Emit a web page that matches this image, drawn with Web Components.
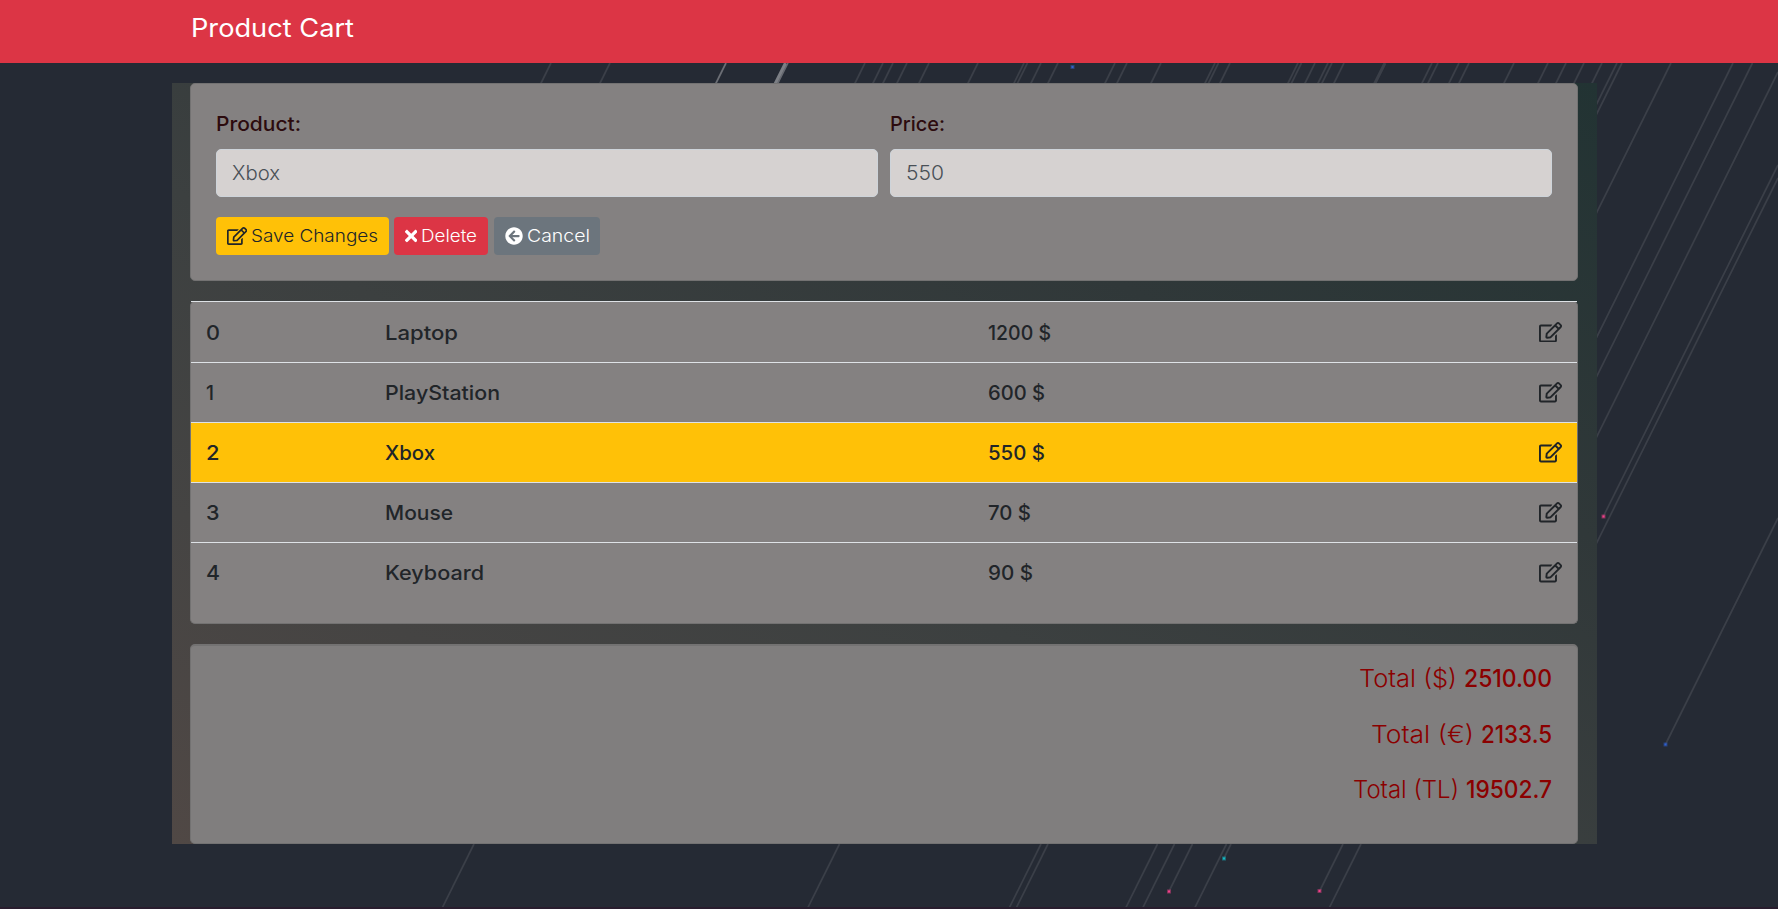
<!DOCTYPE html>
<html lang="en"><head><meta charset="utf-8"><title>Product Cart</title>
<style>
html,body{margin:0;height:100%;overflow:hidden}
body{background:#252a34;font-family:Inter,"Open Sans",sans-serif;font-weight:300;font-size:20px;line-height:30px;color:#212529;position:relative}
</style></head><body>
<falling-lines></falling-lines>
<app-navbar><fit-text w="163">Product Cart</fit-text></app-navbar>
<cart-container>
  <product-form></product-form>
  <product-table></product-table>
  <cart-totals></cart-totals>
</cart-container>
<script>
const def=(name,html,setup)=>customElements.define(name,class extends HTMLElement{
  connectedCallback(){
    if(this.shadowRoot)return;
    const t=document.createElement('template');
    t.innerHTML=typeof html==='function'?html(this):html;
    this.attachShadow({mode:'open'}).appendChild(t.content.cloneNode(true));
    if(setup)setup(this);
  }
});

const icons={
  edit:['0 0 576 512','M402.3 344.9l32-32c5-5 13.7-1.5 13.7 5.7V464c0 26.500-21.500 48-48 48H48c-26.500 0-48-21.500-48-48V112c0-26.500 21.500-48 48-48h273.500c7.100 0 10.700 8.600 5.700 13.700l-32 32c-1.500 1.500-3.500 2.300-5.700 2.300H48v352h352V350.500c0-2.100.8-4.100 2.300-5.600zm156.600-201.800L296.300 405.700l-90.400 10c-26.200 2.900-48.500-19.200-45.600-45.600l10-90.400L432.900 17.100c22.900-22.900 59.900-22.900 82.700 0l43.200 43.200c22.900 22.900 22.900 60 .1 82.800zM460.100 174L402 115.900 216.200 301.800l-7.300 65.300 65.300-7.300L460.100 174zm64.800-79.700l-43.200-43.200c-4.100-4.100-10.800-4.100-14.800 0L436 82l58.100 58.100 30.900-30.900c4-4.200 4-10.800-.1-14.900z'],
  times:['0 0 352 512','M242.720 256l100.070-100.070c12.280-12.280 12.280-32.190 0-44.480l-22.240-22.240c-12.280-12.280-32.190-12.280-44.480 0L176 189.280 75.930 89.210c-12.280-12.280-32.190-12.280-44.480 0L9.210 111.450c-12.280 12.280-12.280 32.190 0 44.480L109.280 256 9.210 356.070c-12.280 12.280-12.280 32.190 0 44.480l22.240 22.240c12.280 12.280 32.200 12.280 44.480 0L176 322.720l100.070 100.070c12.280 12.280 32.200 12.280 44.480 0l22.240-22.240c12.280-12.280 12.280-32.190 0-44.480L242.720 256z'],
  back:['0 0 512 512','M256 504C119 504 8 393 8 256S119 8 256 8s248 111 248 248-111 248-248 248zm28.900-143.600L209.400 288H392c13.300 0 24-10.700 24-24v-16c0-13.300-10.700-24-24-24H209.400l75.500-72.400c9.700-9.300 9.900-24.800.4-34.300l-11-10.900c-9.400-9.400-24.600-9.400-33.900 0L107.700 239c-9.400 9.400-9.400 24.600 0 33.900l132.700 132.700c9.400 9.400 24.600 9.400 33.900 0l11-10.900c9.500-9.500 9.300-25-.4-34.300z']
};
def('app-icon',el=>{
  const[v,d]=icons[el.getAttribute('name')];const[,,w,h]=v.split(' ');
  return `<style>:host{display:inline-block;font-size:18px;flex:none}svg{display:block;height:1em;width:${w/h}em;fill:currentColor}</style><svg viewBox="${v}"><path d="${d}"/></svg>`;
});

def('falling-lines',()=>{
  // Horizontal shift for each pixel of descent.
  const k=-.497,out=[];
  const line=(x,y,y2,o=.1,w=1.7)=>out.push(`<line x1="${x}" y1="${y}" x2="${x+k*(y2-y)}" y2="${y2}" stroke="#fff" stroke-opacity="${o}" stroke-width="${w}"/>`);
  [551,610,865,883,893,907,929,978,1024,1027.5,1041,1058,1115,1127,1161,1215,1218.500,1230,1298,1301.500,1315,1328,1332,1344,1432,1438,1459,1469,1514,1548,1566,1584,1602,1617,1622,1671].forEach(x=>line(x,63,400));
  line(726,63,90,.32,1.7);line(785.500,63,90,.4,3);line(788,63,90,.3,1.5);line(1385,63,90,.1,3);
  line(1733,63,800);line(1752.500,63,800);line(1778,72,600);line(1778,165,516);line(1778,178,700);line(1778,518,744);
  [[474,909],[839.500,909],[1041,909],[1048,909],[1157.500,909],[1174.500,909],[1192.500,891],[1226.500,909],[1231,858],[1343,891],[1361,909]].forEach(([x,e])=>line(x,844,e));
  [[1072.500,67,'#3563c9'],[1603.500,516.500,'#f4408a'],[1665.500,744.500,'#2f5fd0'],[1169,891.500,'#f4408a'],[1319.500,891,'#f4408a'],[1224,858.500,'#14b8c4']].forEach(([x,y,c])=>out.push(`<rect x="${x-2}" y="${y-2}" width="4" height="4" fill="${c}" opacity=".45"/><rect x="${x-1}" y="${y-1}" width="2" height="2" fill="${c}"/>`));
  return `<style>:host{position:absolute;inset:0;z-index:-1;overflow:hidden;box-sizing:border-box;border-bottom:2px solid #291d2e}svg{display:block}</style><svg width="1778" height="909" viewBox="0 0 1778 909">${out.join('')}</svg>`;
});

def('app-navbar','<style>:host{display:block;box-sizing:border-box;height:63px;background:#dc3545;padding:9px 190.500px;color:#fff;font-size:25px;line-height:38px;font-weight:400}</style><slot></slot>');

def('cart-container','<style>:host{display:flex;flex-direction:column;gap:20px;box-sizing:border-box;width:1425px;height:761px;margin:20px 0 0 172px;padding:0 19px 0 18px;background:linear-gradient(to top right,#504845 0%,#454443 22%,#3c4040 43%,#303839 70%,#223333 100%)}</style><slot></slot>');

def('form-field',el=>`<style>
:host{display:block;flex:1}
label{display:block;height:41px;line-height:32px;color:#2c0b0e;font-weight:500;font-size:20px}
.input{box-sizing:border-box;height:48px;border:1px solid #ced4da;border-radius:5px;background:#d6d2d1;padding:0 15px;line-height:47px;color:#495057}
</style><label><fit-text w="${el.getAttribute('lw')}">${el.getAttribute('label')}</fit-text></label><div class="input"><fit-text w="${el.getAttribute('vw')}">${el.getAttribute('value')}</fit-text></div>`);

def('app-button',`<style>
:host{display:flex;align-items:center;box-sizing:border-box;height:38px;padding:0 11px;gap:4px;border-radius:4px;font-size:17.5px;background:#ffc107;color:#212529;white-space:nowrap}
:host([kind=danger]){background:#dc3545;color:#fff}
:host([kind=secondary]){background:#6c757d;color:#fff}
</style><slot></slot>`);

def('product-form',`<style>
:host{display:block;box-sizing:border-box;height:198px;padding:25px;border:1px solid #737272;border-radius:5px;background:#848181}
.fields{display:flex;gap:12px;padding-bottom:20px;margin-top:-1px}
.buttons{display:flex}
app-button{box-sizing:border-box}
</style><div class="fields"><form-field label="Product:" lw="85" value="Xbox" vw="48"></form-field><form-field label="Price:" lw="55" value="550" vw="38"></form-field></div>
<div class="buttons"><app-button style="width:173px;margin-right:5px"><app-icon name="edit"></app-icon><fit-text w="127">Save Changes</fit-text></app-button><app-button kind="danger" style="width:94px;margin-right:6px"><app-icon name="times"></app-icon><fit-text w="56">Delete</fit-text></app-button><app-button kind="secondary" style="width:106px"><app-icon name="back"></app-icon><fit-text w="63">Cancel</fit-text></app-button></div>`);

def('product-row',`<style>
:host{display:grid;grid-template-columns:179px 603px 1fr auto;align-items:center;box-sizing:border-box;height:60px;padding:1px 15px 0 15px;border-top:1px solid #dee2e6;font-weight:500}
:host([active]){background:#ffc107}
:host(:first-of-type){height:61px}
app-icon{font-size:20.500px;margin-top:-1px}
</style><slot name="id"></slot><slot name="name"></slot><slot name="price"></slot><app-icon name="edit"></app-icon>`);

const rows=[['0','Laptop',73,'1200 $',63,14],['1','PlayStation',115,'600 $',57,8],['2','Xbox',50,'550 $',57,13.500],['3','Mouse',68,'70 $',43,13.500],['4','Keyboard',99,'90 $',45,14]];
def('product-table',()=>`<style>
:host{display:block;box-sizing:border-box;height:323px;border:1px solid #737272;border-top:0;border-radius:5px;background:#848181}
</style>${rows.map(([i,n,nw,p,pw,iw])=>`<product-row${i==='2'?' active':''}><fit-text slot="id" w="${iw}">${i}</fit-text><fit-text slot="name" w="${nw}">${n}</fit-text><fit-text slot="price" w="${pw}">${p}</fit-text></product-row>`).join('')}`);

def('total-line',`<style>:host{display:flex;justify-content:flex-end;gap:7px;height:55.500px;line-height:36px;font-size:24px;color:#8b0000}.v{font-weight:500}</style><slot></slot><span class="v"><slot name="value"></slot></span>`);
def('cart-totals',`<style>
:host{display:block;box-sizing:border-box;height:200px;border:1px solid #737272;border-top-width:2px;border-radius:5px;background:#807e7e;padding:15px 25px}
</style>
<total-line><fit-text w="98">Total ($)</fit-text><fit-text slot="value" w="88">2510.00</fit-text></total-line>
<total-line><fit-text w="103">Total (€)</fit-text><fit-text slot="value" w="71">2133.5</fit-text></total-line>
<total-line><fit-text w="106">Total (TL)</fit-text><fit-text slot="value" w="86">19502.7</fit-text></total-line>`);

// Sets its text at the width given in "w". Defined last, when the fonts of its hosts already apply.
def('fit-text','<style>:host{display:inline-block;white-space:pre}span{display:inline-block;transform-origin:0 50%}</style><span><slot></slot></span>',el=>{
  const s=el.shadowRoot.querySelector('span'),w=+el.getAttribute('w'),n=s.getBoundingClientRect().width;
  el.style.width=w+'px';
  s.style.transform=`scaleX(${(w/n).toFixed(4)})`;
});
</script></body></html>
